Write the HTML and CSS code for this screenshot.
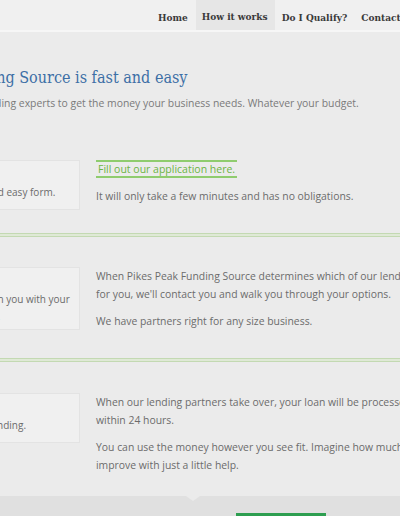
FILE: index.html
```html
<!DOCTYPE html>
<html lang="en">
<head>
<meta charset="utf-8">
<title>How it works</title>
<link rel="stylesheet" href="styles.css">
</head>
<body>
<header class="site-header">
  <nav class="main-nav">
    <a class="nav-item" href="#">Home</a>
    <a class="nav-item is-active" href="#">How it works</a>
    <a class="nav-item" href="#">Do I Qualify?</a>
    <a class="nav-item" href="#">Contact</a>
  </nav>
</header>
<main class="content">
  <section class="intro">
    <h1 class="intro-title">Pikes Peak Funding Source is fast and easy</h1>
    <p class="intro-text">We work with lending experts to get the money your business needs. Whatever your budget.</p>
  </section>

  <section class="step step-first">
    <div class="step-box">
      <h2 class="step-title">Apply</h2>
      <p class="step-desc">Apply via our fast and easy form.</p>
    </div>
    <div class="step-body">
      <a class="step-link" href="#">Fill out our application here.</a>
      <p>It will only take a few minutes and has no obligations.</p>
    </div>
  </section>
  <div class="divider"></div>

  <section class="step step-mid">
    <div class="step-box">
      <h2 class="step-title">Match</h2>
      <p class="step-desc">Our expert will match you with your<br>best lending options.</p>
    </div>
    <div class="step-body">
      <p>When Pikes Peak Funding Source determines which of our lending partners are best<br>for you, we'll contact you and walk you through your options.</p>
      <p>We have partners right for any size business.</p>
    </div>
  </section>
  <div class="divider"></div>

  <section class="step step-last">
    <div class="step-box">
      <h2 class="step-title">Fund</h2>
      <p class="step-desc">Receive your loan funding.</p>
    </div>
    <div class="step-body">
      <p>When our lending partners take over, your loan will be processed and funded<br>within 24 hours.</p>
      <p>You can use the money however you see fit. Imagine how much your business could<br>improve with just a little help.</p>
    </div>
  </section>
</main>
<footer class="site-footer">
  <div class="footer-notch"></div>
  <a class="footer-button" href="#">Apply now</a>
</footer>
</body>
</html>
```

FILE: styles.css
```css
html, body {
  margin: 0;
  padding: 0;
}
body {
  width: 400px;
  height: 516px;
  overflow: hidden;
  background: #ebebeb;
  font-family: "Open Sans", "Liberation Sans", sans-serif;
  color: #6b6b6b;
}
.site-header {
  height: 30px;
  background: #f0f0f0;
  border-bottom: 2px solid #f6f6f6;
  overflow: hidden;
}
.main-nav {
  display: flex;
  height: 30px;
  padding-left: 152px;
  white-space: nowrap;
}
.nav-item {
  display: flex;
  align-items: center;
  padding: 2px 7px 0 6px;
  margin-right: 1px;
  font-family: "DejaVu Serif", serif;
  font-stretch: condensed;
  font-weight: bold;
  font-size: 10px;
  color: #3a3a3a;
  text-decoration: none;
  box-sizing: border-box;
  height: 32px;
}
.nav-item.is-active {
  background: #e6e6e6;
  border-bottom: 2px solid #6cbf8f;
}
.content {
  margin-left: -200px;
}
.intro {
  padding-top: 36px;
}
.intro-title {
  margin: 0;
  font-family: "DejaVu Serif", serif;
  font-stretch: condensed;
  font-weight: normal;
  font-size: 16px;
  line-height: 20px;
  color: #3d6fa6;
  white-space: nowrap;
  padding-left: 71px;
}
.intro-text {
  margin: 7px 0 0;
  font-size: 10.4px;
  line-height: 16px;
  color: #7a7a7a;
  white-space: nowrap;
  padding-left: 112px;
}
.step {
  display: grid;
  grid-template-columns: 280px 1fr;
  column-gap: 16px;
  align-items: start;
  padding: 30px 0 23px;
}
.step-first {
  padding-top: 49px;
}
.step-mid {
  padding-bottom: 28px;
}
.step-mid .step-box {
  padding-bottom: 4px;
}
.step-last {
  padding-top: 31px;
  padding-bottom: 22px;
}
.step-box {
  background: #f0f0f0;
  border: 1px solid #e3e3e3;
  padding: 8px 14px 8px 102px;
}
.step-title {
  margin: 0;
  font-family: "DejaVu Serif", serif;
  font-size: 12px;
  line-height: 15px;
  font-weight: normal;
  color: #3d6fa6;
}
.step-desc {
  margin: 0;
  font-size: 10px;
  line-height: 17px;
  color: #6b6b6b;
  white-space: nowrap;
}
.step-body {
  white-space: nowrap;
  font-size: 10.4px;
  line-height: 18px;
  color: #6b6b6b;
}
.step-body p {
  margin: 0 0 9px;
}
.step-body p:last-child {
  margin-bottom: 0;
}
.step-link {
  display: inline-block;
  padding: 0 2px;
  border-top: 2px solid #8fcc6e;
  border-bottom: 2px solid #8fcc6e;
  color: #6cb544;
  text-decoration: none;
  font-size: 10.5px;
  line-height: 14px;
  margin-bottom: 9px;
}
.divider {
  height: 2px;
  border-top: 1px solid #c3d9b2;
  border-bottom: 1px solid #c3d9b2;
  background: #dfe9d6;
  box-shadow: 0 -5px 0 -4px #efe5ea;
}
.site-footer {
  position: relative;
  background: #e0e0e0;
  height: 21px;
  overflow: hidden;
}
.footer-notch {
  position: absolute;
  left: 186px;
  top: 0;
  width: 0;
  height: 0;
  border-left: 7px solid transparent;
  border-right: 7px solid transparent;
  border-top: 5px solid #ebebeb;
}
.footer-button {
  position: absolute;
  left: 236px;
  top: 17px;
  width: 90px;
  height: 30px;
  background: #2d9e50;
  color: #fff;
  font-size: 11px;
  text-align: center;
  line-height: 30px;
  text-decoration: none;
}
```
